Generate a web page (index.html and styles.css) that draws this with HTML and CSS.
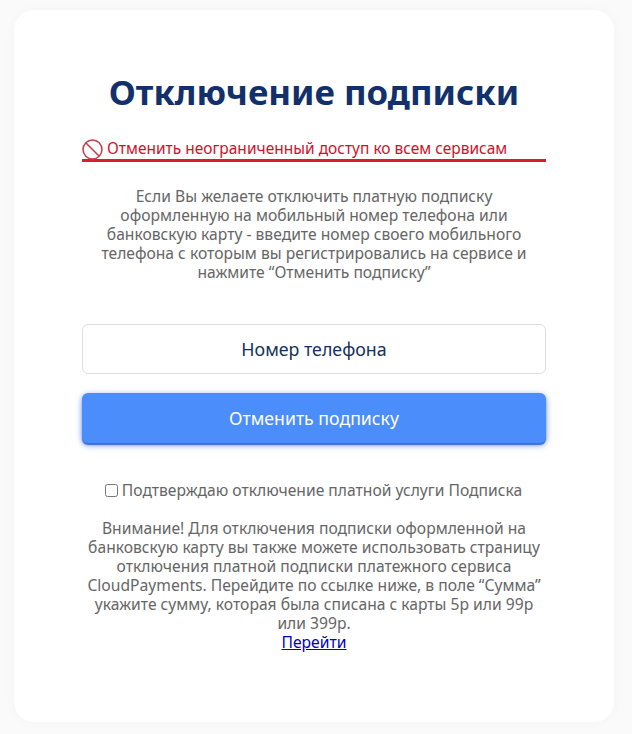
FILE: index.html
```html
<!DOCTYPE html>
<html lang="ru">
<head>
<meta charset="utf-8">
<title>Отключение подписки</title>
<link rel="stylesheet" href="styles.css">
</head>
<body>
<main class="card">
  <h1 class="title">Отключение подписки</h1>
  <div class="notice">
    <svg class="notice-icon" viewBox="0 0 20 20" aria-hidden="true"><circle cx="10" cy="10" r="9"/><path d="M3.8 3.8L16.2 16.2"/></svg>
    <span>Отменить неограниченный доступ ко всем сервисам</span>
  </div>
  <p class="intro">Если Вы желаете отключить платную подписку оформленную на мобильный номер телефона или банковскую карту - введите номер своего мобильного телефона с которым вы регистрировались на сервисе и нажмите “Отменить подписку”</p>
  <input class="phone" type="text" placeholder="Номер телефона">
  <button class="submit" type="button">Отменить подписку</button>
  <label class="confirm"><input class="check" type="checkbox">Подтверждаю отключение платной услуги Подписка</label>
  <p class="note">Внимание! Для отключения подписки оформленной на банковскую карту вы также можете использовать страницу отключения платной подписки платежного сервиса CloudPayments. Перейдите по ссылке ниже, в поле “Сумма” укажите сумму, которая была списана с карты 5р или 99р или 399р.<br><a class="note-link" href="#">Перейти</a></p>
</main>
</body>
</html>
```
FILE: styles.css
```css
* { box-sizing: border-box; }
html, body { margin: 0; height: 734px; overflow: hidden; }
body {
  background: #fafafa;
  padding: 10px 18px 12px 14px;
  font-family: "Noto Sans", "Open Sans", sans-serif;
  color: #666;
}
.card {
  width: 600px;
  height: 712px;
  background: #fff;
  border-radius: 20px;
  box-shadow: 0 0 12px rgba(0, 0, 0, 0.03);
  padding: 60px 68px 0;
  display: flex;
  flex-direction: column;
  align-items: stretch;
}
.title {
  margin: 0;
  font-size: 34.8px;
  line-height: 44px;
  font-weight: 700;
  color: #12306b;
  text-align: center;
}
.notice {
  margin-top: 24px;
  height: 24px;
  border-bottom: 3px solid #d8202c;
  display: flex;
  align-items: flex-start;
  gap: 4px;
  color: #d0112b;
  font-size: 15.5px;
  line-height: 20px;
}
.notice-icon { width: 21px; height: 21px; margin-top: 1px; flex: none; fill: none; stroke: #c8404c; stroke-width: 1.5; }
.intro {
  margin: 25px 15px 0;
  font-size: 15.65px;
  line-height: 19px;
  text-align: center;
}
.phone {
  margin-top: 42px;
  height: 50px;
  width: 100%;
  border: 1px solid #dedede;
  border-radius: 6px;
  background: #fff;
  text-align: center;
  font: 17.8px "Noto Sans", "Open Sans", sans-serif;
  outline: none;
}
.phone::placeholder { color: #14305c; opacity: 1; }
.submit {
  margin-top: 19px;
  height: 50px;
  width: 100%;
  border: 0;
  border-radius: 6px;
  background: #4b8dfb;
  box-shadow: 0 2px 1px #3a6fdc, 0 2px 6px rgba(50, 100, 240, 0.7);
  color: #fff;
  font: 17.7px "Noto Sans", "Open Sans", sans-serif;
}
.confirm {
  margin-top: 37px;
  padding-right: 1px;
  display: flex;
  justify-content: center;
  align-items: center;
  gap: 4px;
  font-size: 15.65px;
  line-height: 20px;
}
.check { margin: 0; width: 13px; height: 13px; }
.note {
  margin: 19px 0 0;
  font-size: 15.65px;
  line-height: 19px;
  text-align: center;
}
.note-link { display: inline-block; color: #0000c8; }
```
